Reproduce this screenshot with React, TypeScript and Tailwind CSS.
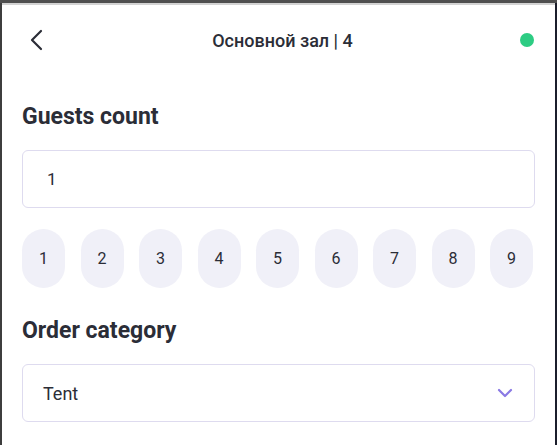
import React, { useState } from "react";

const counts = [1, 2, 3, 4, 5, 6, 7, 8, 9];

function App() {
  const [guests, setGuests] = useState("1");

  return (
    <div className="flex h-[445px] w-[557px] flex-col bg-[#3d3d3d] font-['Roboto',sans-serif] text-[#2b2d37]">
      <div className="h-[3px] shrink-0 bg-[#4f4f4f]" />
      <div className="flex flex-1 pl-[2px]">
        <div className="flex flex-1 flex-col border-t-2 border-[#d3d3d3] bg-white">
          {/* header */}
          <div className="mt-[18px] flex h-[34px] items-center justify-between pl-[27px] pr-[21px]">
            <button className="flex h-[24px] w-[16px] items-center">
              <svg width="14" height="22" viewBox="0 0 14 22" fill="none">
                <path
                  d="M12 2L3 11L12 20"
                  stroke="#2b2d37"
                  strokeWidth="2.2"
                  strokeLinecap="round"
                  strokeLinejoin="round"
                />
              </svg>
            </button>
            <div className="text-[18px] font-medium">Основной зал | 4</div>
            <span className="h-[14px] w-[14px] rounded-full bg-[#2dcc83]" />
          </div>

          <div className="px-[20px]">
            <h2 className="mt-[46px] text-[23px] leading-[28px] font-bold">Guests count</h2>
            <input
              value={guests}
              onChange={(e) => setGuests(e.target.value)}
              className="mt-[19px] h-[58px] w-full rounded-[6px] border border-[#dedbef] px-[24px] text-[17px] text-[#2b2d37] outline-none"
            />
            <div className="mt-[21px] flex justify-between pr-[2px]">
              {counts.map((n) => (
                <button
                  key={n}
                  onClick={() => setGuests(String(n))}
                  className="flex h-[59px] w-[43px] items-center justify-center rounded-full bg-[#f0f0f8] text-[16px] text-[#2b2d37]"
                >
                  {n}
                </button>
              ))}
            </div>

            <h2 className="mt-[29px] text-[23px] leading-[28px] font-bold">Order category</h2>
            <div className="mt-[19px] flex h-[58px] items-center justify-between rounded-[6px] border border-[#dedbef] pl-[20px] pr-[21px]">
              <span className="text-[18px]">Tent</span>
              <svg width="16" height="10" viewBox="0 0 16 10" fill="none">
                <path
                  d="M2 2L8 8L14 2"
                  stroke="#8a79e4"
                  strokeWidth="2.2"
                  strokeLinecap="round"
                  strokeLinejoin="round"
                />
              </svg>
            </div>
          </div>
        </div>
        <div className="w-[2px] bg-[#1b1e2c]" />
      </div>
    </div>
  );
}

export default App;
